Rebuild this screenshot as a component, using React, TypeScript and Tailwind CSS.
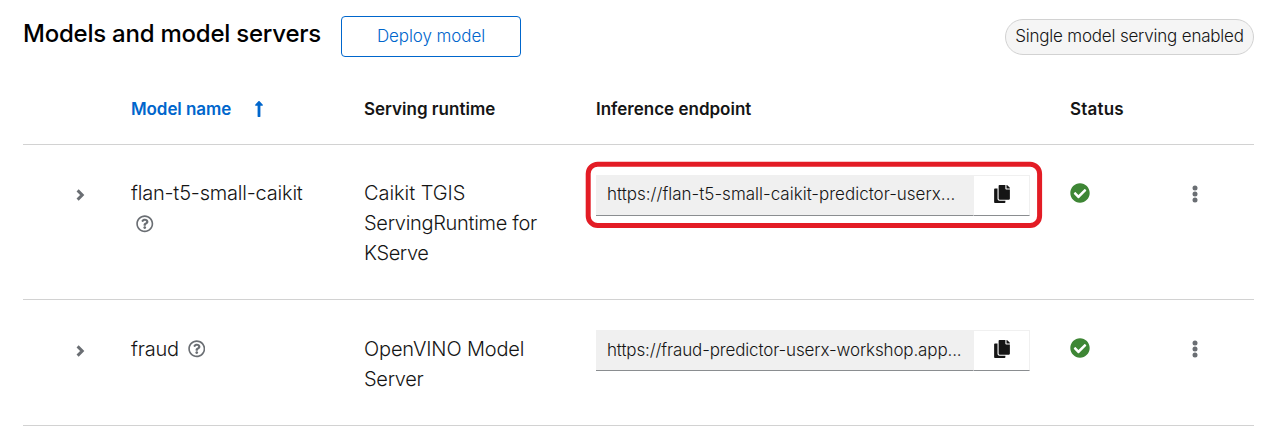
import React from "react";
import {
  FaCheckCircle,
  FaCopy,
  FaLongArrowAltUp,
  FaRegQuestionCircle,
} from "react-icons/fa";

const columns = "grid grid-cols-[108px_233px_232px_474px_104px_1fr]";

function Chevron() {
  return (
    <svg className="h-3 w-[9px]" viewBox="0 0 9 12" fill="none" stroke="currentColor" strokeWidth="3">
      <path d="M1.6 1.4 6.2 6 1.6 10.6" />
    </svg>
  );
}

function Kebab() {
  return (
    <svg className="h-[18px] w-[6px]" viewBox="0 0 6 18" fill="currentColor">
      <circle cx="3" cy="3" r="2.5" />
      <circle cx="3" cy="9" r="2.5" />
      <circle cx="3" cy="15" r="2.5" />
    </svg>
  );
}

type ClipboardProps = { url: string; urlClass: string; highlighted?: boolean };

function Clipboard({ url, urlClass, highlighted }: ClipboardProps) {
  return (
    <div className="relative flex h-[41px] w-[434px]">
      <div className={`w-[377px] whitespace-nowrap border-b border-[#8a8d90] bg-[#f0f0f0] pl-[11px] text-[17px] ${urlClass}`}>
        {url}
      </div>
      <button
        aria-label="Copy"
        className="flex h-full w-[57px] items-start justify-center border-t border-r border-b border-l border-[#f0f0f0] border-b-[#8a8d90] pt-[9px]"
      >
        <FaCopy className="h-[18px] w-4" />
      </button>
      {highlighted && (
        <svg className="absolute -top-[14px] -left-[11px] h-[68px] w-[458px]" viewBox="0 0 458 68" fill="none">
          <rect x="3.2" y="3.2" width="451.4" height="61.4" rx="9.5" stroke="#e31c25" strokeWidth="5" />
        </svg>
      )}
    </div>
  );
}

type RowProps = ClipboardProps & {
  name: string;
  nameClass: string;
  helpClass: string;
  toggleClass: string;
  runtimeClass: string;
  runtime: { text: string; tracking: string }[];
  className: string;
};

function ModelRow({ name, nameClass, helpClass, toggleClass, runtimeClass, runtime, url, urlClass, highlighted, className }: RowProps) {
  return (
    <div className={`${columns} border-b border-[#d2d2d2] pt-[30px] text-xl leading-[30px] font-[330] ${className}`}>
      <button aria-label="Expand" className={`pl-[53px] text-[#6a6e73] ${toggleClass}`}>
        <Chevron />
      </button>
      <div className={nameClass}>
        <span className="tracking-[-0.2px]">{name}</span>
        <FaRegQuestionCircle className={`h-[17.5px] w-[17.5px] text-[#6a6e73] ${helpClass}`} />
      </div>
      <div className={runtimeClass}>
        {runtime.map((line) => (
          <div key={line.text} className={line.tracking}>{line.text}</div>
        ))}
      </div>
      <Clipboard url={url} urlClass={urlClass} highlighted={highlighted} />
      <div className="pt-2">
        <FaCheckCircle className="h-5 w-5 text-[#3e8635]" />
      </div>
      <button aria-label="Actions" className="h-[38px] pl-[17.5px] text-[#6a6e73]">
        <Kebab />
      </button>
    </div>
  );
}

export default function App() {
  return (
    <main className="h-[440px] bg-white pr-[19px] pl-[23px] font-['Inter','Liberation_Sans',sans-serif] text-[#151515]">
      <header className="flex h-[74px] items-start">
        <h1 className="w-[318px] pt-4 text-2xl leading-9 font-medium tracking-[-0.23px] whitespace-nowrap text-black">
          Models and model servers
        </h1>
        <button className="mt-4 h-[41px] w-[180px] rounded-[4px] border border-[#0066cc] text-[17px] font-[330] tracking-[-0.1px] text-[#0066cc]">
          Deploy model
        </button>
        <span className="mt-[19px] ml-auto flex h-9 w-[249px] items-center justify-center rounded-full border border-[#d2d2d2] bg-[#f5f5f5] text-[17px] font-[330] tracking-[-0.2px] whitespace-nowrap">
          Single model serving enabled
        </span>
      </header>
      <div className={`${columns} h-[71px] items-center border-b border-[#d2d2d2] pt-0.5 text-[17px] font-semibold`}>
        <span />
        <span className="flex items-center gap-[23px] text-[#0066cc]">
          <span className="tracking-[-0.08px]">Model name</span>
          <FaLongArrowAltUp className="mb-0.5 h-[18px] w-[10px]" />
        </span>
        <span>Serving runtime</span>
        <span>Inference endpoint</span>
        <span className="tracking-[0.2px]">Status</span>
        <span />
      </div>
      <ModelRow
        name="flan-t5-small-caikit"
        nameClass="flex flex-col pt-[3px]"
        helpClass="mt-[7px] ml-[5px]"
        toggleClass="h-10"
        runtimeClass="pt-[3px]"
        runtime={[
          { text: "Caikit TGIS", tracking: "tracking-[-0.05px]" },
          { text: "ServingRuntime for", tracking: "tracking-[-0.3px]" },
          { text: "KServe", tracking: "tracking-[-0.4px]" },
        ]}
        url="https://flan-t5-small-caikit-predictor-userx..."
        urlClass="leading-[39px]"
        highlighted
        className="h-[155px]"
      />
      <ModelRow
        name="fraud"
        nameClass="flex pt-1"
        helpClass="mt-[6px] ml-[9px]"
        toggleClass="h-[41px]"
        runtimeClass="pt-1"
        runtime={[
          { text: "OpenVINO Model", tracking: "tracking-[-0.15px]" },
          { text: "Server", tracking: "tracking-[-0.3px]" },
        ]}
        url="https://fraud-predictor-userx-workshop.app..."
        urlClass="leading-[41px] tracking-[-0.14px]"
        className="h-[126px]"
      />
    </main>
  );
}
